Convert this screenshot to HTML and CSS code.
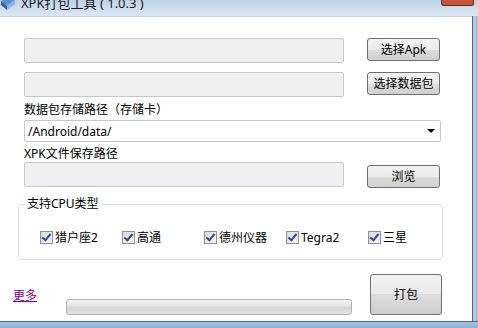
FILE: index.html
```html
<!DOCTYPE html>
<html>
<head>
  <title>XPK打包工具</title>
  <link rel="stylesheet" href="styles.css">
</head>
<body>
  <div class="window">
    <div class="titlebar">
      <svg class="app-icon" width="16" height="14" viewBox="0 0 16 14">
        <path d="M1 4 L9 0 L15 3 L7 9 Z" fill="#5b8fd0"/>
        <path d="M1 4 L7 9 L7 13 L1 8 Z" fill="#2d5fa8"/>
        <path d="M7 9 L15 3 L15 7 L7 13 Z" fill="#8fb7e6"/>
      </svg>
      <span class="title">XPK打包工具 ( 1.0.3 )</span>
      <span class="close-btn"></span>
    </div>
    <div class="middle">
      <div class="client">
        <div class="row">
          <div class="field"></div>
          <div class="btn">选择Apk</div>
        </div>
        <div class="row row-second">
          <div class="field"></div>
          <div class="btn">选择数据包</div>
        </div>
        <div class="label label-card">数据包存储路径（存储卡）</div>
        <div class="combo">
          <span>/Android/data/</span>
          <span class="arrow"></span>
        </div>
        <div class="label label-xpk">XPK文件保存路径</div>
        <div class="row">
          <div class="field"></div>
          <div class="btn btn-low">浏览</div>
        </div>
        <div class="group">
          <span class="legend">支持CPU类型</span>
          <label class="check"><span class="box"></span>猎户座2</label>
          <label class="check"><span class="box"></span>高通</label>
          <label class="check"><span class="box"></span>德州仪器</label>
          <label class="check"><span class="box"></span>Tegra2</label>
          <label class="check"><span class="box"></span>三星</label>
        </div>
        <div class="bottom">
          <a class="more" href="#">更多</a>
          <div class="progress"></div>
          <div class="btn btn-pack">打包</div>
        </div>
      </div>
      <div class="frame-right"></div>
    </div>
    <div class="frame-bottom"></div>
  </div>
</body>
</html>
```

FILE: styles.css
```css
html, body {
  margin: 0;
  padding: 0;
}
body {
  width: 478px;
  height: 328px;
  overflow: hidden;
  font-family: "Noto Sans", "Noto Sans CJK SC", sans-serif;
  font-size: 12px;
  color: #000;
  background: #fff;
}
.window {
  display: flex;
  flex-direction: column;
  height: 328px;
}
.titlebar {
  height: 16px;
  display: flex;
  align-items: flex-start;
  background: linear-gradient(#bfd3e8, #dce7f2);
  position: relative;
  overflow: hidden;
}
.app-icon {
  margin: -3px 0 0 0;
}
.title {
  margin: -6px 0 0 5px;
  font-size: 13px;
  line-height: 18px;
  color: #1b1b1b;
}
.close-btn {
  position: absolute;
  left: 441px;
  top: 0;
  width: 31px;
  height: 5px;
  background: #c6553f;
  border: 1px solid #6b2a1f;
  border-top: 0;
  border-radius: 0 0 3px 3px;
}
.middle {
  height: 305px;
  display: flex;
}
.client {
  width: 472px;
  box-sizing: border-box;
  padding: 21px 0 0 24px;
  background: #fff;
  border-top: 1px solid #c9d6e3;
}
.frame-right {
  flex: 1;
  background: linear-gradient(90deg, #4d6582 0, #4d6582 1px, #b9cfe6 1px, #9fbbd9 100%);
}
.frame-bottom {
  flex: 1;
  background: linear-gradient(#4d6582 0, #4d6582 1px, #a8c2de 1px, #8fb0d4 100%);
}
.row {
  display: flex;
  align-items: flex-start;
}
.row-second {
  margin-top: 9px;
}
.field {
  width: 318px;
  height: 23px;
  background: #f0f0f0;
  border: 1px solid #c5c9cf;
  border-radius: 2px;
}
.btn {
  margin-left: 23px;
  width: 71px;
  height: 21px;
  line-height: 21px;
  text-align: center;
  border: 1px solid #707070;
  border-radius: 3px;
  background: linear-gradient(#f2f2f2 0, #ebebeb 50%, #dddddd 50%, #cfcfcf 100%);
}
.btn-low {
  margin-top: 3px;
}
.label {
  height: 16px;
  line-height: 16px;
}
.label-card {
  margin-top: 5px;
}
.combo {
  margin-top: 2px;
  width: 407px;
  height: 20px;
  border: 1px solid #c5c9cf;
  border-radius: 2px;
  display: flex;
  align-items: center;
  justify-content: space-between;
  padding: 0 5px 0 3px;
}
.arrow {
  width: 0;
  height: 0;
  border-left: 4px solid transparent;
  border-right: 4px solid transparent;
  border-top: 4px solid #000;
}
.label-xpk {
  margin-top: 4px;
}
.group {
  margin: 16px 0 0 -6px;
  width: 402px;
  height: 54px;
  border: 1px solid #d5dfe5;
  border-radius: 4px;
  padding: 0 0 0 21px;
  position: relative;
  display: grid;
  grid-template-columns: repeat(5, 82px);
  align-items: center;
}
.legend {
  position: absolute;
  left: 6px;
  top: -9px;
  padding: 0 2px;
  background: #fff;
  line-height: 16px;
}
.check {
  display: flex;
  align-items: center;
  white-space: nowrap;
  height: 16px;
  margin-top: 10px;
}
.box {
  flex-shrink: 0;
  width: 11px;
  height: 11px;
  border: 1px solid #8e8f8f;
  background: linear-gradient(135deg, #dcdcdc, #f6f6f6);
  margin-right: 2px;
  position: relative;
}
.box::after {
  content: "";
  position: absolute;
  left: 3px;
  top: 0;
  width: 3px;
  height: 7px;
  border-right: 2px solid #2a4f8a;
  border-bottom: 2px solid #2a4f8a;
  transform: rotate(40deg);
}
.bottom {
  display: flex;
  align-items: flex-start;
  margin: 14px 0 0 -11px;
}
.more {
  margin-top: 15px;
  color: #800080;
  line-height: 14px;
}
.progress {
  margin: 25px 0 0 29px;
  width: 284px;
  height: 14px;
  border: 1px solid #b2b2b2;
  border-radius: 3px;
  background: linear-gradient(#f3f3f3, #e0e0e0 50%, #d4d4d4 51%, #e4e4e4);
}
.btn-pack {
  margin-left: 18px;
  height: 39px;
  line-height: 39px;
  width: 70px;
}
```
